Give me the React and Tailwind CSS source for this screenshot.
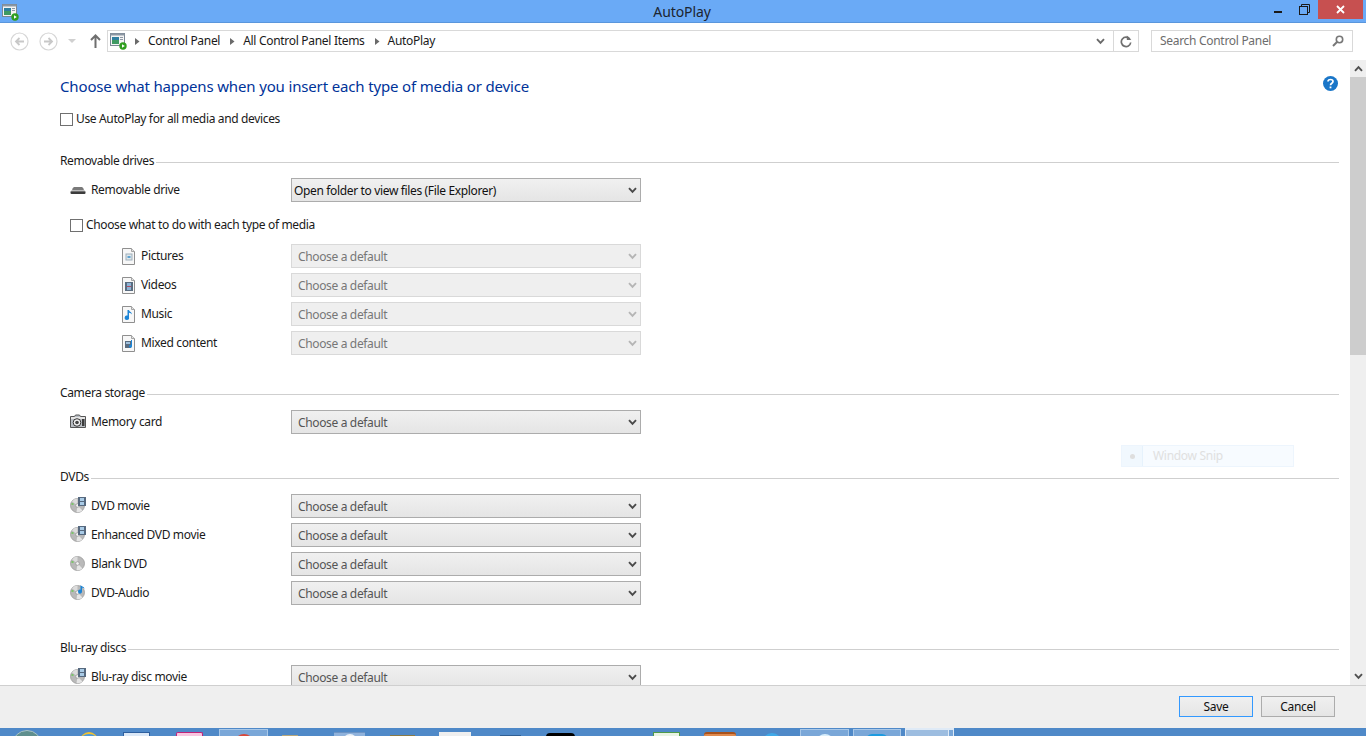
import React from "react";

const FONT = "font-['Noto_Sans','Open_Sans',sans-serif]";

function AutoPlayIcon() {
  return (
    <svg width="17" height="17" viewBox="0 0 17 17" className="block">
      <rect x="0.5" y="0.5" width="14" height="12" fill="#f4f4f4" stroke="#7b8794" />
      <rect x="0.5" y="0.5" width="14" height="2" fill="#8c97a3" />
      <rect x="2" y="4" width="7" height="7" fill="#2f7f9f" />
      <rect x="2" y="7" width="7" height="4" fill="#3f9a63" />
      <rect x="10" y="4" width="3" height="1" fill="#8c97a3" />
      <rect x="10" y="6" width="3" height="1" fill="#8c97a3" />
      <circle cx="13" cy="13" r="3.7" fill="#2f9e1f" />
      <path d="M12 11.2v3.6l2.8-1.8z" fill="#fff" />
    </svg>
  );
}

function NavCircle({ dir }) {
  return (
    <svg width="19" height="19" viewBox="0 0 19 19" className="block">
      <circle cx="9.5" cy="9.5" r="8.5" fill="none" stroke="#d6d6d6" strokeWidth="1.2" />
      {dir === "left" ? (
        <path d="M14 9.5H6M9.5 6l-3.5 3.5 3.5 3.5" fill="none" stroke="#c8c8c8" strokeWidth="1.8" />
      ) : (
        <path d="M5 9.5h8M9.5 6l3.5 3.5-3.5 3.5" fill="none" stroke="#c8c8c8" strokeWidth="1.8" />
      )}
    </svg>
  );
}

function Crumb({ children }) {
  return (
    <div className="flex items-center gap-[8px]">
      <svg width="5" height="7" viewBox="0 0 5 7" className="block shrink-0">
        <path d="M0 0l4.5 3.5L0 7z" fill="#6a6a6a" />
      </svg>
      <span className="text-[12px] text-[#1a1a1a] leading-none tracking-[-0.3px] whitespace-nowrap">{children}</span>
    </div>
  );
}

function Chevron({ color = "#505050", size = 9 }) {
  return (
    <svg width={size} height="7" viewBox="0 0 9 7" className="block shrink-0">
      <path d="M1 1.2l3.5 3.6L8 1.2" fill="none" stroke={color} strokeWidth="1.9" />
    </svg>
  );
}

function Check({ className = "" }) {
  return <span className={`block w-[13px] h-[13px] border border-[#707070] bg-white shrink-0 ${className}`} />;
}

function Select({ text, disabled, selected }) {
  const tone = disabled
    ? "bg-[#efefef] border-[#d9d9d9] text-[#777777]"
    : "bg-gradient-to-b from-[#f0f0f0] to-[#e5e5e5] border-[#acacac]";
  return (
    <div
      className={`w-[350px] h-[24px] shrink-0 border flex items-center justify-between pr-[3px] ${
        selected ? "pl-[2px] text-[#111111]" : "pl-[6px]"
      } ${disabled || selected ? "" : "text-[#555555]"} ${tone}`}
    >
      <span className="text-[12px] leading-none tracking-[-0.35px] whitespace-nowrap mt-[1px]">{text}</span>
      <Chevron color={disabled ? "#b5b5b5" : "#4a4a4a"} />
    </div>
  );
}

function Section({ title, children, className = "" }) {
  return (
    <section className={className}>
      <div className="flex items-center h-[16px]">
        <span className="text-[12px] leading-none text-[#1a1a1a] tracking-[-0.35px] whitespace-nowrap">{title}</span>
        <span className="flex-1 h-px bg-[#cfcfcf] ml-[2px] mt-[3px]" />
      </div>
      {children}
    </section>
  );
}

function DriveIcon() {
  return (
    <svg width="16" height="16" viewBox="0 0 16 16" className="block">
      <path d="M2 9.5C2.500 6.300 4 6 5 6h6c1 0 2.500 .3 3 3.500z" fill="#7a7a7a" />
      <rect x="0.5" y="10" width="15" height="3" rx="1" fill="#3c3c3c" />
      <rect x="1" y="9.400" width="14" height="1" fill="#bdbdbd" />
    </svg>
  );
}

function FileIcon({ kind }) {
  return (
    <svg width="14" height="17" viewBox="0 0 14 17" className="block">
      <path d="M.5.5h9l3 3v13H.5z" fill="#f7f7f7" stroke="#8f8f8f" />
      <path d="M9.500.5v3h3" fill="#e3e3e3" stroke="#a5a5a5" />
      {kind === "pic" && (
        <>
          <rect x="4" y="6" width="6" height="6" fill="#dfe6ea" stroke="#9fb0bb" />
          <rect x="5.500" y="8" width="3" height="2" fill="#5fa2cf" />
        </>
      )}
      {kind === "vid" && (
        <>
          <rect x="3" y="5" width="8" height="9" fill="#5a6c80" />
          <rect x="5" y="6" width="4" height="3" fill="#8db4d6" />
          <rect x="5" y="9" width="4" height="1" fill="#b5485f" />
          <rect x="5" y="10" width="4" height="3" fill="#8db4d6" />
        </>
      )}
      {kind === "mus" && <path d="M7 4v7.200A2.200 2.200 0 1 1 5.500 9.600V4h1.500c.5 2 3 2 3 4.500-.7-1.300-1.700-1.500-3-1.800z" fill="#1b84d6" />}
      {kind === "mix" && (
        <>
          <rect x="3" y="6" width="6" height="7" fill="#5a6c80" />
          <rect x="4" y="7" width="4" height="2" fill="#9fc0dd" />
          <path d="M10 5v6.200A1.500 1.500 0 1 1 9 9.800V5z" fill="#1b84d6" />
        </>
      )}
    </svg>
  );
}

function CameraIcon() {
  return (
    <svg width="16" height="15" viewBox="0 0 16 15" className="block">
      <path d="M.5 2.500h4l1-1.500h4l1 1.500h5v11H.5z" fill="#b9bec4" stroke="#555" />
      <rect x="1" y="3" width="14" height="2" fill="#e4e4e4" />
      <circle cx="7" cy="8.500" r="3.800" fill="#f2f2f2" stroke="#333" />
      <circle cx="7" cy="8.500" r="1.800" fill="#444" />
      <rect x="12" y="5" width="2.500" height="7" fill="#3b3b3b" />
    </svg>
  );
}

function DiscIcon({ badge }) {
  return (
    <svg width="16" height="16" viewBox="0 0 16 16" className="block">
      <circle cx="7.500" cy="8.500" r="7" fill="#b9b9b9" stroke="#9a9a9a" strokeWidth="0.800" />
      <path d="M7.500 8.500L2 4.500A7 7 0 0 1 7.500 1.500z" fill="#dcdcdc" />
      <path d="M7.500 8.500l5 5a7 7 0 0 1-6 1.500z" fill="#e5e5e5" />
      <circle cx="7.500" cy="8.500" r="1.800" fill="#f4f4f4" stroke="#8a8a8a" strokeWidth="0.600" />
      <rect x="1.500" y="6" width="2" height="2" fill="#7cc46a" />
      {badge === "film" && (
        <>
          <rect x="8" y="0" width="8" height="9" fill="#56697f" />
          <rect x="10" y="1" width="4" height="3" fill="#a9cbe6" />
          <rect x="10" y="5" width="4" height="3" fill="#a9cbe6" />
        </>
      )}
      {badge === "note" && <path d="M12 1v6.500A2 2 0 1 1 10.500 5.700V1c1 1.500 4 1.500 4 4-.7-1-1.500-1.300-2.500-1.500z" fill="#1b84d6" />}
    </svg>
  );
}

function Row({ icon, label, sel }) {
  return (
    <div className="flex items-center h-[24px] mb-[5px]">
      <div className="pl-[10px] w-[21px] shrink-0 box-content mt-[-2px]">{icon}</div>
      <span className="w-[200px] shrink-0 text-[12px] text-[#1a1a1a] leading-none tracking-[-0.35px] mt-[-1px] whitespace-nowrap">{label}</span>
      {sel}
    </div>
  );
}

function SubRow({ kind, label }) {
  return (
    <div className="flex items-center h-[24px] mb-[5px]">
      <div className="pl-[62px] w-[19px] box-content shrink-0">
        <FileIcon kind={kind} />
      </div>
      <span className="w-[150px] shrink-0 text-[12px] text-[#1a1a1a] leading-none tracking-[-0.35px] mt-[-1px] whitespace-nowrap">{label}</span>
      <Select text="Choose a default" disabled />
    </div>
  );
}

function TaskIcon({ className }) {
  return <span className={`block shrink-0 ${className}`} />;
}

export default function App() {
  return (
    <div className={`w-[1366px] h-[736px] flex flex-col overflow-hidden bg-white ${FONT}`}>
      {/* Title bar */}
      <header className="relative h-[23px] shrink-0 bg-[#6aaaf6] border-b border-[#5a96dc] flex items-start">
        <div className="ml-[2px] mt-[4px]">
          <AutoPlayIcon />
        </div>
        <span className="absolute left-0 right-[2px] top-[3px] text-center text-[14px] leading-[18px] text-[#1c2530] tracking-[-0.1px]">AutoPlay</span>
        <div className="ml-auto flex items-start pr-[3px]">
          <span className="block w-[8px] h-[2px] bg-[#1a1a1a] mt-[11px] mr-[17px]" />
          <svg width="11" height="11" viewBox="0 0 11 11" className="block mt-[4px] mr-[8px]">
            <rect x="0.500" y="2.500" width="8" height="8" fill="none" stroke="#1a1a1a" />
            <path d="M2.500 2.500V.5h8v8H8.500" fill="none" stroke="#1a1a1a" />
          </svg>
          <div className="w-[45px] h-[19px] bg-[#c75050] flex items-center justify-center">
            <svg width="9" height="9" viewBox="0 0 9 9" className="block">
              <path d="M1 1l7 7M8 1L1 8" stroke="#fff" strokeWidth="1.800" />
            </svg>
          </div>
        </div>
      </header>

      {/* Address row */}
      <nav className="h-[37px] shrink-0 flex items-center pb-[1px] bg-white">
        <div className="ml-[10px]"><NavCircle dir="left" /></div>
        <div className="ml-[10px]"><NavCircle dir="right" /></div>
        <svg width="8" height="4" viewBox="0 0 8 4" className="block ml-[10px]"><path d="M0 0h8L4 4z" fill="#d0d0d0" /></svg>
        <svg width="11" height="14" viewBox="0 0 11 14" className="block ml-[14px]">
          <path d="M5.500 14V2M1 6l4.500-4.500L10 6" fill="none" stroke="#6f6f6f" strokeWidth="2" />
        </svg>
        <div className="ml-[6px] w-[1032px] h-[22px] border border-[#d9d9d9] flex items-center">
          <div className="ml-[2px] mr-[8px] mt-[1px]"><AutoPlayIcon /></div>
          <div className="flex items-center gap-[10px]">
            <Crumb>Control Panel</Crumb>
            <Crumb>All Control Panel Items</Crumb>
            <Crumb>AutoPlay</Crumb>
          </div>
          <div className="ml-auto flex items-center h-full">
            <div className="w-[25px] flex justify-center"><Chevron color="#6a6a6a" /></div>
            <div className="w-[25px] h-full border-l border-[#d9d9d9] flex items-center justify-center">
              <svg width="12" height="13" viewBox="0 0 12 13" className="block">
                <path d="M9.800 4A4.700 4.700 0 1 0 10.700 7.500" fill="none" stroke="#6f6f6f" strokeWidth="1.700" />
                <path d="M6.800 0.500v4.500h4.500z" fill="#6f6f6f" />
              </svg>
            </div>
          </div>
        </div>
        <div className="ml-[12px] w-[202px] h-[22px] border border-[#d9d9d9] flex items-center justify-between pl-[8px] pr-[8px]">
          <span className="text-[12px] leading-none text-[#6d6d6d] tracking-[-0.3px]">Search Control Panel</span>
          <svg width="12" height="12" viewBox="0 0 12 12" className="block">
            <circle cx="7.500" cy="4.500" r="3.200" fill="none" stroke="#777" strokeWidth="1.600" />
            <path d="M5 7L1 11" stroke="#777" strokeWidth="2" />
          </svg>
        </div>
      </nav>

      {/* Content */}
      <div className="relative flex-1 min-h-0 flex">
        <main className="flex-1 min-w-0 overflow-hidden pl-[60px] pr-[11px] pt-[16px]">
          <div className="flex items-start justify-between">
            <h1 className="text-[15px] leading-[22px] mt-[-1px] mb-[1px] text-[#003399] font-normal tracking-[-0.15px]">
              Choose what happens when you insert each type of media or device
            </h1>
            <svg width="15" height="15" viewBox="0 0 15 15" className="block mr-[1px]">
              <circle cx="7.500" cy="7.500" r="7.500" fill="#1a76c8" />
              <path d="M5 5.500C5 2.800 10 2.800 10 5.500 10 7.300 7.500 7.200 7.500 9.300" fill="none" stroke="#fff" strokeWidth="1.700" />
              <rect x="6.600" y="10.500" width="1.800" height="1.800" fill="#fff" />
            </svg>
          </div>
          <label className="flex items-center mt-[11px] h-[20px]">
            <Check />
            <span className="ml-[3px] text-[12px] leading-none text-[#1a1a1a] tracking-[-0.35px] mt-[-1px]">Use AutoPlay for all media and devices</span>
          </label>

          <Section title="Removable drives" className="mt-[24px]">
            <div className="mt-[9px]" />
            <Row icon={<DriveIcon />} label="Removable drive" sel={<Select text="Open folder to view files (File Explorer)" selected />} />
            <label className="flex items-center h-[20px] mt-[13px] ml-[10px]">
              <Check />
              <span className="ml-[3px] text-[12px] leading-none text-[#1a1a1a] tracking-[-0.35px]">Choose what to do with each type of media</span>
            </label>
            <div className="mt-[9px]" />
            <SubRow kind="pic" label="Pictures" />
            <SubRow kind="vid" label="Videos" />
            <SubRow kind="mus" label="Music" />
            <SubRow kind="mix" label="Mixed content" />
          </Section>

          <Section title="Camera storage" className="mt-[30px]">
            <div className="mt-[9px]" />
            <Row icon={<CameraIcon />} label="Memory card" sel={<Select text="Choose a default" />} />
          </Section>

          <Section title="DVDs" className="mt-[35px]">
            <div className="mt-[9px]" />
            <Row icon={<DiscIcon badge="film" />} label="DVD movie" sel={<Select text="Choose a default" />} />
            <Row icon={<DiscIcon badge="film" />} label="Enhanced DVD movie" sel={<Select text="Choose a default" />} />
            <Row icon={<DiscIcon />} label="Blank DVD" sel={<Select text="Choose a default" />} />
            <Row icon={<DiscIcon badge="note" />} label="DVD-Audio" sel={<Select text="Choose a default" />} />
          </Section>

          <Section title="Blu-ray discs" className="mt-[35px]">
            <div className="mt-[9px]" />
            <Row icon={<DiscIcon badge="film" />} label="Blu-ray disc movie" sel={<Select text="Choose a default" />} />
          </Section>
        </main>

        {/* Scrollbar */}
        <aside className="w-[16px] shrink-0 bg-[#efefef] flex flex-col">
          <div className="h-[17px] flex items-center justify-center">
            <span className="rotate-180"><Chevron color="#505050" /></span>
          </div>
          <div className="h-[278px] bg-[#cdcdcd]" />
          <div className="flex-1" />
          <div className="h-[17px] flex items-center justify-center">
            <Chevron color="#505050" />
          </div>
        </aside>

        {/* Faded snip toolbar overlay */}
        <div className="absolute left-[1121px] top-[385px] w-[173px] h-[22px] bg-[#f7fbff] border border-[#edf5fd] flex items-center">
          <div className="w-[21px] h-full bg-[#f1f8fe] border-r border-[#e6f2fc] flex items-center justify-center">
            <span className="block w-[5px] h-[5px] rounded-full bg-[#dedede]" />
          </div>
          <span className="ml-[10px] text-[12px] leading-none text-[#e0e0e0] tracking-[-0.3px]">Window Snip</span>
        </div>
      </div>

      {/* Footer */}
      <footer className="h-[43px] shrink-0 bg-[#efefef] border-t border-[#cfcfcf] flex items-start justify-end pt-[10px] pr-[31px] gap-[8px]">
        <button className="w-[74px] h-[21px] border border-[#3399ff] bg-gradient-to-b from-[#f0f0f0] to-[#e5e5e5] text-[12px] leading-none text-[#111111] tracking-[-0.3px]">Save</button>
        <button className="w-[74px] h-[21px] border border-[#acacac] bg-gradient-to-b from-[#f0f0f0] to-[#e5e5e5] text-[12px] leading-none text-[#111111] tracking-[-0.3px]">Cancel</button>
      </footer>

      {/* Taskbar */}
      <div className="h-[8px] shrink-0 bg-[#4f89c8] flex items-start overflow-hidden">
        <TaskIcon className="ml-[12px] mt-[2px] w-[30px] h-[30px] rounded-full bg-[#5f8f8e] border border-[#a9c3c7]" />
        <TaskIcon className="ml-[38px] mt-[4px] w-[18px] h-[18px] rounded-t-full border-t-2 border-[#f2c230] bg-[#4a9adf]" />
        <TaskIcon className="ml-[25px] mt-[4px] w-[27px] h-[10px] bg-[#dbe8f7] border-t border-x border-[#2e5f9e]" />
        <TaskIcon className="ml-[26px] mt-[4px] w-[27px] h-[10px] bg-[#f8c6e0] border-t border-x border-[#c0247a] rounded-t-[2px]" />
        <div className="ml-[16px] mt-[1px] w-[49px] h-[10px] bg-[#7aa7d8] border-t border-x border-[#a9c8e8] flex justify-center">
          <span className="block mt-[4px] w-[20px] h-[20px] rounded-full bg-[#d9483b]" />
        </div>
        <TaskIcon className="ml-[14px] mt-[7px] w-[16px] h-[4px] bg-[#b8a77a]" />
        <div className="ml-[36px] mt-[4px] w-[31px] h-[8px] bg-[#8fb2dc] border-t border-[#6d94c4] flex justify-center">
          <span className="block mt-[1px] w-[14px] h-[14px] rounded-full bg-[#eef3f8]" />
        </div>
        <TaskIcon className="ml-[25px] mt-[7px] w-[25px] h-[4px] bg-[#8a7a45]" />
        <TaskIcon className="ml-[24px] mt-[4px] w-[32px] h-[8px] bg-[#efefef]" />
        <TaskIcon className="ml-[29px] mt-[7px] w-[21px] h-[4px] bg-[#2f5f94]" />
        <TaskIcon className="ml-[25px] mt-[5px] w-[29px] h-[8px] rounded-t-[4px] bg-black" />
        <TaskIcon className="ml-[78px] mt-[4px] w-[27px] h-[8px] bg-[#e8f3e3] border-t border-x border-[#4f9a4a]" />
        <TaskIcon className="ml-[24px] mt-[4px] w-[32px] h-[8px] bg-[#e08a4e] border-t-2 border-[#a8521c] rounded-t-[3px]" />
        <TaskIcon className="ml-[26px] mt-[5px] w-[20px] h-[20px] rounded-full bg-[#3fa9e8]" />
        <div className="ml-[18px] mt-[1px] w-[49px] h-[10px] bg-[#7aa7d8] border-t border-x border-[#a9c8e8] flex justify-center">
          <span className="block mt-[4px] w-[18px] h-[18px] rounded-full bg-[#d8eefb]" />
        </div>
        <div className="ml-[4px] mt-[1px] w-[48px] h-[10px] bg-[#7aa7d8] border-t border-x border-[#a9c8e8] flex justify-center">
          <span className="block mt-[4px] w-[22px] h-[12px] rounded-full bg-[#1d9be0]" />
        </div>
        <div className="ml-[4px] w-[44px] h-[10px] bg-[#9dbde0] border-t-2 border-x border-[#dfeaf6]" />
        <div className="w-[5px] h-[10px] bg-[#7aa7d8] border-t-2 border-r border-[#dfeaf6]" />
      </div>
    </div>
  );
}
